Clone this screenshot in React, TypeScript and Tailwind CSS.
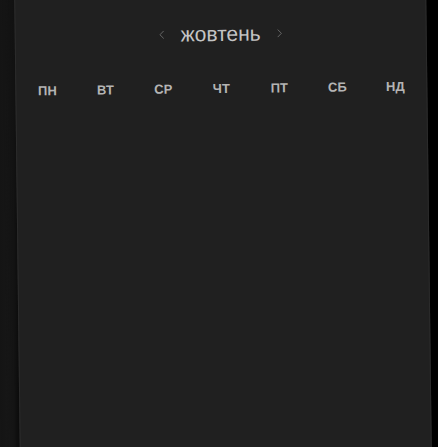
import { ChevronLeft, ChevronRight } from "lucide-react";

const calendarData = {
  month: "жовтень",
  weekdays: ["пн", "вт", "ср", "чт", "пт", "сб", "нд"],
};

export default function App() {
  return (
    <div className="h-[447px] w-[438px] overflow-hidden bg-[linear-gradient(to_right,#151515_0px,#191919_14px,#000_30px)] font-['Liberation_Sans',Arial,sans-serif]">
      {/* Calendar card */}
      <div className="ml-[17px] -mt-[16px] h-[480px] w-[412px] rotate-[-0.7deg] border-x border-[#2b2b2b] bg-[#202020] shadow-[-6px_0_12px_rgba(0,0,0,0.35)]">
        {/* Month header */}
        <div className="flex items-center justify-center gap-[12px] pt-[39px] text-[#c4c4c4]">
          <ChevronLeft className="h-[14px] w-[14px] text-[#666]" strokeWidth={1.7} />
          <span className="text-[21px] leading-[22px]">{calendarData.month}</span>
          <ChevronRight className="h-[14px] w-[14px] text-[#666]" strokeWidth={1.7} />
        </div>

        {/* Weekdays */}
        <div className="mt-[36px] grid grid-cols-7 px-[2px]">
          {calendarData.weekdays.map((day) => (
            <div
              key={day}
              className="text-center text-[13px] font-bold uppercase leading-[16px] text-[#b4b4b4]"
            >
              {day}
            </div>
          ))}
        </div>
      </div>
    </div>
  );
}
